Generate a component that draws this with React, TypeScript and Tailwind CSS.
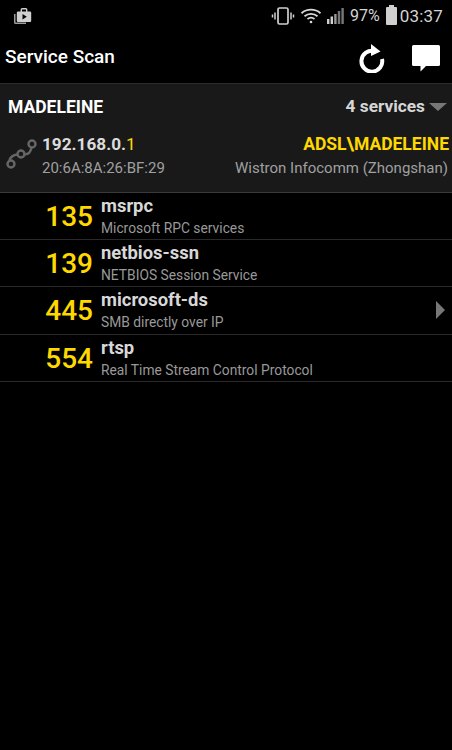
const rows = [
  { port: "135", name: "msrpc", desc: "Microsoft RPC services" },
  { port: "139", name: "netbios-ssn", desc: "NETBIOS Session Service" },
  { port: "445", name: "microsoft-ds", desc: "SMB directly over IP", arrow: true },
  { port: "554", name: "rtsp", desc: "Real Time Stream Control Protocol" },
];

function StatusBar() {
  return (
    <div className="h-[32px] flex items-center pl-[13px] pr-[9px] text-[#d4d4d4]">
      <svg width="20" height="20" viewBox="0 0 20 20" fill="#cfcfcf">
        <path d="M1 8h1.500v8.500H13V18H2.500A1.500 1.500 0 0 1 1 16.500z" opacity="0.75" />
        <path d="M5 5.500h2.600V3.600A1.600 1.600 0 0 1 9.200 2h3.600a1.600 1.600 0 0 1 1.600 1.600v1.900H17a1.200 1.200 0 0 1 1.200 1.200v8a1.200 1.200 0 0 1-1.200 1.200H5a1.200 1.200 0 0 1-1.200-1.200v-8A1.200 1.200 0 0 1 5 5.500zM9 3.400v2.100h4V3.400zM9.500 8v5.400l4.300-2.700z" fillRule="evenodd" />
      </svg>
      <div className="flex-1" />
      <svg width="24" height="20" viewBox="0 0 24 20" fill="none" stroke="#cfcfcf">
        <rect x="7" y="2" width="10" height="16" rx="1.500" strokeWidth="1.700" />
        <path d="M4 6.500v7M1.500 8.500v3M20 6.500v7M22.500 8.500v3" strokeWidth="1.500" />
      </svg>
      <svg className="ml-[5px]" width="22" height="18" viewBox="0 0 22 18" fill="none" stroke="#d8d8d8" strokeWidth="1.800">
        <path d="M1.500 6.200C7 1.500 15 1.500 20.500 6.200" />
        <path d="M4.500 9.200c3.800-3.200 9.200-3.200 13 0" />
        <path d="M7.500 12c2-1.600 5-1.600 7 0" />
        <circle cx="11" cy="15" r="1.300" fill="#d8d8d8" stroke="none" />
      </svg>
      <svg className="ml-[4px]" width="19" height="18" viewBox="0 0 19 18" fill="#cfcfcf">
        <rect x="1" y="12" width="2.400" height="5" />
        <rect x="4.600" y="9.500" width="2.400" height="7.500" />
        <rect x="8.200" y="7" width="2.400" height="10" fill="#999" />
        <rect x="11.800" y="4" width="2.400" height="13" fill="#777" />
        <rect x="15.400" y="1" width="2.400" height="16" fill="#777" />
      </svg>
      <span className="ml-[5px] text-[16px] leading-none">97%</span>
      <div className="ml-[6px] w-[11px] h-[18px] bg-[#cfcfcf] rounded-[1px] relative">
        <div className="absolute -top-[2px] left-[3px] w-[5px] h-[2px] bg-[#cfcfcf]" />
      </div>
      <span className="ml-[3px] text-[17px] leading-none tracking-[0.2px]">03:37</span>
    </div>
  );
}

function ActionBar() {
  return (
    <div className="h-[52px] flex items-center pl-[5px] pr-[11px] border-b border-[#2b2b2b]">
      <span className="flex-1 text-[19px] font-medium text-white">Service Scan</span>
      <svg className="-mt-[2px]" width="30" height="32" viewBox="0 0 30 32" fill="none">
        <path d="M17.500 10.200A10.400 10.400 0 1 0 25 18" stroke="#fff" strokeWidth="4" />
        <path d="M14 3l9.500 7.400L14 15z" fill="#fff" />
      </svg>
      <svg className="ml-[24px]" width="30" height="28" viewBox="0 0 30 28" fill="#fff">
        <path d="M2.500 1h25A1.500 1.500 0 0 1 29 2.500v18a1.500 1.500 0 0 1-1.500 1.500H15l-5.500 5.500V22h-7A1.500 1.500 0 0 1 1 20.500v-18A1.500 1.500 0 0 1 2.500 1z" />
      </svg>
    </div>
  );
}

function Header() {
  return (
    <div className="bg-[#191919] border-b border-[#3a3a3a] h-[109px] pt-[11px] pl-[8px] pr-[3px]">
      <div className="flex items-center h-[24px]">
        <span className="flex-1 text-[17.500px] font-bold text-white">MADELEINE</span>
        <span className="text-[17.300px] font-bold text-[#d6d6d6]">4 services</span>
        <div className="ml-[4px] mr-[2px] w-0 h-0 border-l-[9px] border-r-[9px] border-t-[8px] border-l-transparent border-r-transparent border-t-[#777777]" />
      </div>
      <div className="flex mt-[13px]">
        <svg className="mt-[6px] -ml-[3px]" width="34" height="34" viewBox="0 0 34 34" fill="none" stroke="#666666" strokeWidth="2.400">
          <circle cx="6" cy="26" r="3.500" />
          <circle cx="16" cy="16" r="3.500" />
          <circle cx="27" cy="6" r="3.500" />
          <path d="M4.500 22.800c.5-3 3-5.800 8-6.300M19.500 16.300c3 .3 6-2 7-6.800" />
        </svg>
        <div className="ml-[3px] flex-1">
          <div className="text-[17.200px] font-bold leading-[24px] text-[#dcdcdc]">
            192.168.0.<span className="text-[#ffd800] font-normal">1</span>
          </div>
          <div className="text-[15px] leading-[22px] text-[#a0a0a0] mt-[1px]">20:6A:8A:26:BF:29</div>
        </div>
        <div className="text-right">
          <div className="text-[17.500px] font-bold leading-[24px] text-[#ffd800]">ADSL\MADELEINE</div>
          <div className="text-[15px] leading-[22px] text-[#a0a0a0] mt-[1px] pr-[1px]">Wistron Infocomm (Zhongshan)</div>
        </div>
      </div>
    </div>
  );
}

function Row({ port, name, desc, arrow }: { port: string; name: string; desc: string; arrow?: boolean }) {
  return (
    <div className="h-[47.200px] flex border-b border-[#2a2a2a] relative">
      <div className="w-[93px] text-right text-[28px] font-medium leading-[47px] text-[#ffd800]">{port}</div>
      <div className="ml-[8px]">
        <div className="text-[18.400px] font-bold leading-[20px] mt-[3px] text-[#d8d8d8]">{name}</div>
        <div className="text-[13.800px] leading-[18px] mt-[3px] text-[#999999]">{desc}</div>
      </div>
      {arrow && (
        <div className="absolute right-[7px] top-[14px] w-0 h-0 border-t-[9px] border-b-[9px] border-l-[9px] border-t-transparent border-b-transparent border-l-[#777777]" />
      )}
    </div>
  );
}

export default function App() {
  return (
    <div className="w-[452px] h-[750px] bg-black overflow-hidden font-['Roboto',sans-serif]">
      <StatusBar />
      <ActionBar />
      <Header />
      <div>
        {rows.map((r) => (
          <Row key={r.port} {...r} />
        ))}
      </div>
    </div>
  );
}
